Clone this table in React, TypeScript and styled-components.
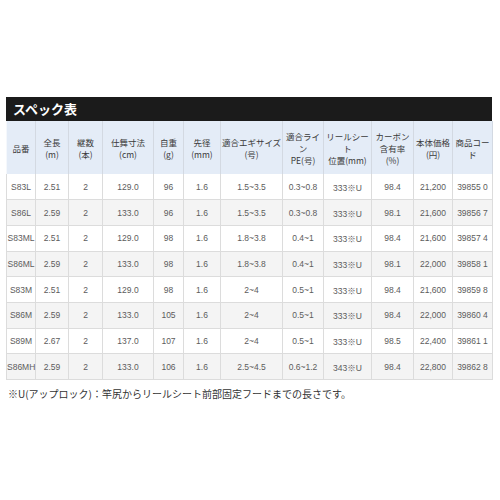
import styled, { createGlobalStyle } from "styled-components";

const GlobalStyle = createGlobalStyle`
  html, body {
    margin: 0;
    padding: 0;
    background: #ffffff;
  }
  body {
    font-family: "Liberation Sans", "Noto Sans CJK JP", sans-serif;
  }
`;

const Page = styled.div`
  width: 500px;
  height: 500px;
  padding: 97px 8px 0 6px;
  box-sizing: border-box;
`;

const TitleBar = styled.div`
  width: 486px;
  height: 24px;
  background: #1b1b1b;
  color: #ffffff;
  font-family: "Noto Sans CJK JP", sans-serif;
  font-weight: bold;
  font-size: 13px;
  line-height: 24px;
  padding-left: 7px;
  box-sizing: border-box;
`;

const SpecTable = styled.table`
  width: 486px;
  table-layout: fixed;
  border-collapse: collapse;
`;

const HeadCell = styled.th`
  background: #e4ecf7;
  color: #3a3a3a;
  font-family: "Noto Sans CJK JP", sans-serif;
  font-weight: normal;
  font-size: 8.5px;
  line-height: 12px;
  height: 53px;
  padding: 0;
  text-align: center;
  white-space: nowrap;
  border-left: 1px solid #f5f8fc;
  border-right: 1px solid #d3d9e2;
  box-sizing: border-box;
`;

const Row = styled.tr<{ $alt?: boolean }>`
  background: ${(p) => (p.$alt ? "#f4f4f4" : "#ffffff")};
`;

const Cell = styled.td`
  color: #5c5c5c;
  font-size: 8.5px;
  height: 25.7px;
  padding: 0;
  text-align: center;
  white-space: nowrap;
  border: 1px solid #dcdcdc;
  border-top: none;
  box-sizing: border-box;
`;

const Note = styled.p`
  margin: 7px 0 0 2px;
  color: #333333;
  font-family: "Noto Sans CJK JP", sans-serif;
  font-size: 10px;
  line-height: 14px;
`;

const WIDTHS = [29, 33, 34, 51, 30, 37, 62, 41, 48, 42, 39, 40];

const HEADERS = [
  ["品番"],
  ["全長", "(m)"],
  ["継数", "(本)"],
  ["仕舞寸法", "(cm)"],
  ["自重", "(g)"],
  ["先径", "(mm)"],
  ["適合エギサイズ", "(号)"],
  ["適合ライ", "ン", "PE(号)"],
  ["リールシー", "ト", "位置(mm)"],
  ["カーボン", "含有率", "(%)"],
  ["本体価格", "(円)"],
  ["商品コー", "ド"],
];

const ROWS = [
  ["S83L", "2.51", "2", "129.0", "96", "1.6", "1.5~3.5", "0.3~0.8", "333※U", "98.4", "21,200", "39855 0"],
  ["S86L", "2.59", "2", "133.0", "96", "1.6", "1.5~3.5", "0.3~0.8", "333※U", "98.1", "21,600", "39856 7"],
  ["S83ML", "2.51", "2", "129.0", "98", "1.6", "1.8~3.8", "0.4~1", "333※U", "98.4", "21,600", "39857 4"],
  ["S86ML", "2.59", "2", "133.0", "98", "1.6", "1.8~3.8", "0.4~1", "333※U", "98.1", "22,000", "39858 1"],
  ["S83M", "2.51", "2", "129.0", "98", "1.6", "2~4", "0.5~1", "333※U", "98.4", "21,600", "39859 8"],
  ["S86M", "2.59", "2", "133.0", "105", "1.6", "2~4", "0.5~1", "333※U", "98.4", "22,000", "39860 4"],
  ["S89M", "2.67", "2", "137.0", "107", "1.6", "2~4", "0.5~1", "333※U", "98.5", "22,400", "39861 1"],
  ["S86MH", "2.59", "2", "133.0", "106", "1.6", "2.5~4.5", "0.6~1.2", "343※U", "98.4", "22,800", "39862 8"],
];

export default function App() {
  return (
    <Page>
      <GlobalStyle />
      <TitleBar>スペック表</TitleBar>
      <SpecTable>
        <colgroup>
          {WIDTHS.map((w, i) => (
            <col key={i} style={{ width: w }} />
          ))}
        </colgroup>
        <thead>
          <tr>
            {HEADERS.map((lines, i) => (
              <HeadCell key={i}>
                {lines.map((l, j) => (
                  <div key={j}>{l}</div>
                ))}
              </HeadCell>
            ))}
          </tr>
        </thead>
        <tbody>
          {ROWS.map((row, i) => (
            <Row key={i} $alt={i % 2 === 1}>
              {row.map((v, j) => (
                <Cell key={j}>{v}</Cell>
              ))}
            </Row>
          ))}
        </tbody>
      </SpecTable>
      <Note>※U(アップロック)：竿尻からリールシート前部固定フードまでの長さです。</Note>
    </Page>
  );
}
